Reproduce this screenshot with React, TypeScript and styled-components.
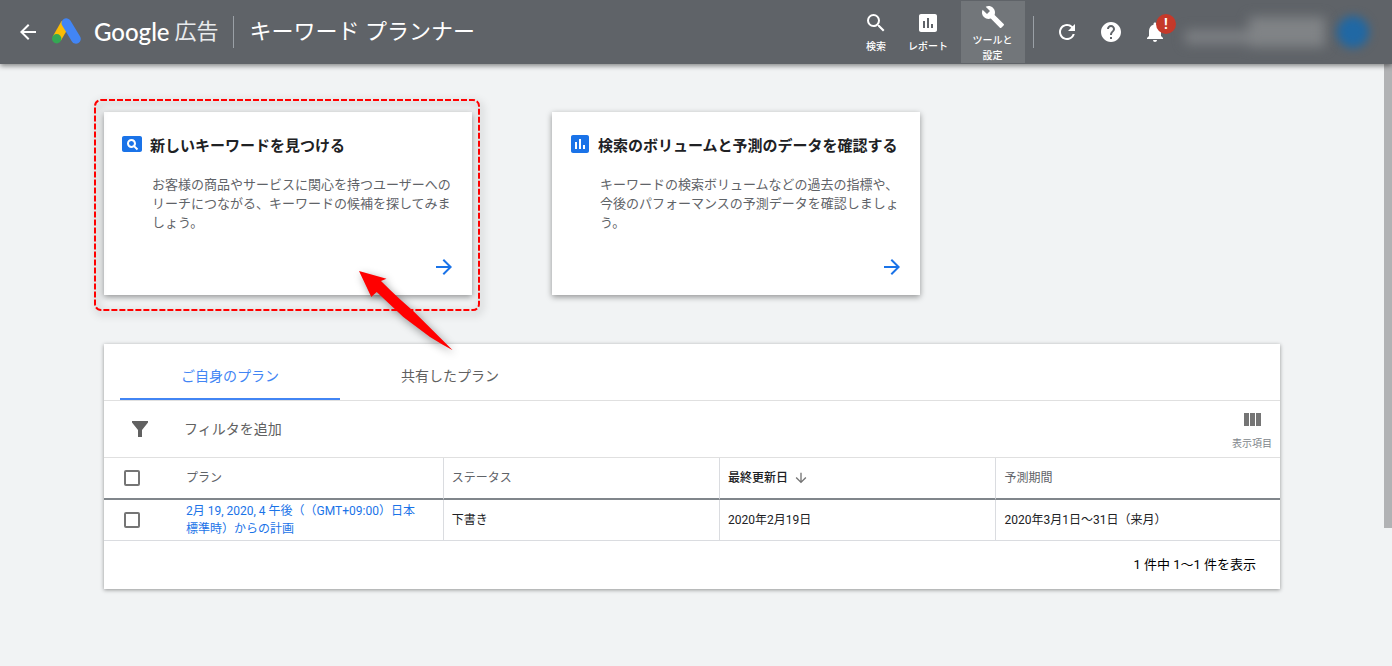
import React from 'react';
import styled, { createGlobalStyle, css } from 'styled-components';
import {
  MdArrowBack,
  MdArrowDownward,
  MdArrowForward,
  MdAssessment,
  MdBuild,
  MdHelp,
  MdNotifications,
  MdPageview,
  MdRefresh,
  MdSearch,
} from 'react-icons/md';

const GlobalStyle = createGlobalStyle`
  *, *::before, *::after { box-sizing: border-box; }
  body {
    margin: 0;
    background: #f1f3f4;
    color: #202124;
    font-family: Roboto, "Noto Sans CJK JP", sans-serif;
    font-size: 12px;
    text-spacing-trim: space-all;
  }
  button { font: inherit; color: inherit; background: none; border: 0; padding: 0; cursor: pointer; }
  a { color: inherit; text-decoration: none; }
  svg { display: block; flex: none; }
`;

const Page = styled.div`
  display: flex;
  flex-direction: column;
  min-height: 100vh;
`;

/* ---------- top bar ---------- */

const TopBar = styled.header`
  position: relative;
  z-index: 1;
  display: flex;
  align-items: center;
  height: 64px;
  padding: 0 19px 0 16px;
  background: #5f6368;
  color: #fff;
  box-shadow: 0 2px 5px rgba(0, 0, 0, 0.45);
`;

const Brand = styled.a`
  display: flex;
  align-items: center;
  margin-left: 11px;
  white-space: nowrap;
`;

const BrandName = styled.span`
  margin-left: 13px;
  font-family: Lato, sans-serif;
  font-size: 24px;
  font-weight: 500;
  line-height: 32px;
`;

const BrandProduct = styled.span`
  margin-left: 5px;
  color: #e8eaed;
  font-size: 22px;
  line-height: 32px;
`;

const Divider = styled.span<{ $before: number; $after: number }>`
  width: 1px;
  height: 32px;
  margin: 0 ${(p) => p.$after}px 0 ${(p) => p.$before}px;
  background: #9aa0a6;
`;

const PageTitle = styled.h1`
  margin: 0;
  font-size: 22px;
  font-weight: 400;
  line-height: 32px;
  white-space: nowrap;
`;

const Tools = styled.nav`
  display: flex;
  align-items: center;
  margin-left: auto;
`;

const ToolButton = styled.button<{ $active?: boolean }>`
  display: flex;
  flex-direction: column;
  align-items: center;
  justify-content: center;
  gap: 4px;
  width: 52px;
  height: 62px;
  font-size: 10px;
  font-weight: 500;
  line-height: 15px;
  ${(p) =>
    p.$active &&
    css`
      width: 64px;
      margin-left: 7px;
      padding: 4px 11px 0 10px;
      background: #72767a;
    `}
`;

const IconButton = styled.button`
  position: relative;
  display: flex;
  align-items: center;
  justify-content: center;
  width: 44px;
  height: 44px;
`;

const BackButton = styled(IconButton)`
  width: 24px;
`;

const Alert = styled.span`
  position: absolute;
  top: 4px;
  right: 1px;
  width: 20px;
  height: 20px;
  border-radius: 50%;
  background: #c5392a;
  font-size: 14px;
  font-weight: 700;
  line-height: 20px;
  text-align: center;
`;

const Account = styled.div`
  display: flex;
  align-items: center;
  margin-left: 8px;
`;

const AccountLines = styled.div`
  display: flex;
  align-items: center;
  width: 140px;
  filter: blur(6px);
`;

const AccountBlock = styled.span<{ $wide?: boolean }>`
  width: ${(p) => (p.$wide ? 76 : 64)}px;
  height: ${(p) => (p.$wide ? 30 : 14)}px;
  margin-top: ${(p) => (p.$wide ? 0 : 10)}px;
  background: ${(p) => (p.$wide ? '#808386' : '#7c7f83')};
`;

const Avatar = styled.span`
  width: 32px;
  height: 32px;
  margin: 0 4px 0 12px;
  border-radius: 50%;
  background: #2068a4;
  filter: blur(5px);
`;

/* ---------- body ---------- */

const Body = styled.div`
  display: flex;
  flex: 1;
`;

const Main = styled.main`
  display: flex;
  flex: 1;
  flex-direction: column;
  gap: 49px;
  min-width: 0;
  padding: 48px 104px;
`;

const ScrollTrack = styled.div`
  width: 8px;
`;

const ScrollThumb = styled.div`
  height: 77%;
  background: #b1b2b4;
`;

const Cards = styled.div`
  display: flex;
  gap: 80px;
`;

const CardSlot = styled.div`
  position: relative;
  flex: 0 1 368px;
`;

const Card = styled.a`
  display: flex;
  flex-direction: column;
  min-height: 183px;
  padding: 20px 16px 16px;
  background: #fff;
  box-shadow: 0 2px 6px rgba(0, 0, 0, 0.4);
`;

const CardHead = styled.div`
  display: flex;
  gap: 6px;
  color: #1a73e8;
`;

const CardTitle = styled.h2`
  margin: 0;
  color: #202124;
  font-size: 15px;
  font-weight: 700;
  line-height: 29px;
`;

const CardText = styled.p`
  margin: 14px 4px 0 32px;
  color: #5f6368;
  font-size: 13px;
  line-height: 19px;
`;

const CardGo = styled.span`
  align-self: flex-end;
  margin-top: auto;
  color: #1a73e8;
`;

const Markup = styled.svg`
  position: absolute;
  top: -16px;
  left: -14px;
  overflow: visible;
  pointer-events: none;
  filter: drop-shadow(2px 3px 4px rgba(0, 0, 0, 0.4));
`;

const Panel = styled.section`
  background: #fff;
  box-shadow: 0 1px 4px rgba(0, 0, 0, 0.4);
`;

const Tabs = styled.div`
  display: flex;
  height: 57px;
  padding: 0 16px;
  border-bottom: 1px solid #e0e0e0;
`;

const Tab = styled.button<{ $active?: boolean }>`
  width: 220px;
  height: 56px;
  padding-top: 8px;
  border-bottom: 2px solid ${(p) => (p.$active ? '#4285f4' : 'transparent')};
  color: ${(p) => (p.$active ? '#4285f4' : '#616161')};
  font-size: 14px;
`;

const FilterBar = styled.div`
  display: flex;
  align-items: center;
  height: 57px;
  padding: 0 8px 0 24px;
  border-bottom: 1px solid #e0e0e0;
  color: #616161;
`;

const AddFilter = styled.button`
  margin-left: 32px;
  font-size: 14px;
  line-height: 18px;
`;

const ColumnsButton = styled.button`
  display: flex;
  flex-direction: column;
  align-items: center;
  gap: 4px;
  margin-left: auto;
  color: #80868b;
  font-size: 10px;
  line-height: 15px;
`;

const Table = styled.table`
  width: 100%;
  border-collapse: separate;
  border-spacing: 0;
  table-layout: fixed;
`;

const Col = styled.col<{ $width?: string }>`
  width: ${(p) => p.$width || 'auto'};
`;

const HeadCell = styled.th<{ $rule?: boolean; $sorted?: boolean }>`
  height: 42px;
  padding: 0 8px;
  border-bottom: 2px solid #80868b;
  border-left: ${(p) => (p.$rule ? '1px solid #dadce0' : '0')};
  color: ${(p) => (p.$sorted ? '#202124' : '#5f6368')};
  font-weight: ${(p) => (p.$sorted ? 500 : 400)};
  line-height: 18px;
  text-align: left;
`;

const Cell = styled.td<{ $rule?: boolean }>`
  height: 41px;
  padding: 0 8px;
  border-bottom: 1px solid #dadce0;
  border-left: ${(p) => (p.$rule ? '1px solid #dadce0' : '0')};
  line-height: 18px;
`;

const SortLabel = styled.span`
  display: flex;
  align-items: center;
  gap: 5px;
  svg { color: #757575; }
`;

const Check = styled.input`
  display: block;
  width: 16px;
  height: 16px;
  margin: 0 0 0 12px;
  border: 2px solid #757575;
  border-radius: 2px;
  appearance: none;
  &:checked { background: #1a73e8; }
`;

const PlanLink = styled.a`
  display: block;
  max-width: 238px;
  color: #1a73e8;
`;

const Summary = styled.footer`
  padding: 14px 24px 14px;
  color: #000;
  font-size: 13px;
  line-height: 20px;
  text-align: right;
`;

/* ---------- drawings ---------- */

const AdsLogo = () => (
  <svg width="30" height="28" viewBox="0 0 30 28" aria-hidden="true">
    <path d="M14.5 5.400 5.700 20.700" stroke="#fbbc04" strokeWidth="9.2" />
    <path d="M15.300 5.100 25 20.900" stroke="#4285f4" strokeWidth="9.600" strokeLinecap="round" />
    <circle cx="5.700" cy="20.800" r="4.700" fill="#34a853" />
  </svg>
);

const FunnelIcon = () => (
  <svg width="24" height="24" viewBox="0 0 24 24" fill="#616161" aria-hidden="true">
    <path d="M4 4h16v1.6L14 13v7h-4v-7L4 5.6z" />
  </svg>
);

const ColumnsIcon = () => (
  <svg width="24" height="24" viewBox="0 0 24 24" fill="#757575" aria-hidden="true">
    <path d="M10 18h5V5h-5v13zm-6 0h5V5H4v13zM16 5v13h5V5h-5z" />
  </svg>
);

const Highlight = () => (
  <Markup width="392" height="260" viewBox="90 96 392 260" aria-hidden="true">
    <rect
      x="95"
      y="100"
      width="384"
      height="210"
      rx="6"
      fill="none"
      stroke="#f00"
      strokeWidth="2"
      strokeDasharray="6 2"
    />
    <path
      d="M359 271 386.500 278.700 381 281Q391 291 400 299.300L413.500 311.300 452.700 350.300Q441 344 430 337L403.300 317 376.700 292 371.300 297z"
      fill="#f00"
    />
  </Markup>
);

export default function App() {
  return (
    <Page>
      <GlobalStyle />
      <TopBar>
        <BackButton aria-label="戻る">
          <MdArrowBack size={24} />
        </BackButton>
        <Brand href="#">
          <AdsLogo />
          <BrandName>Google</BrandName>
          <BrandProduct>広告</BrandProduct>
        </Brand>
        <Divider $before={14} $after={16} />
        <PageTitle>キーワード プランナー</PageTitle>
        <Tools>
          <ToolButton>
            <MdSearch size={24} />
            検索
          </ToolButton>
          <ToolButton>
            <MdAssessment size={24} />
            レポート
          </ToolButton>
          <ToolButton $active>
            <MdBuild size={24} />
            ツールと設定
          </ToolButton>
          <Divider $before={8} $after={11} />
          <IconButton aria-label="更新">
            <MdRefresh size={24} />
          </IconButton>
          <IconButton aria-label="ヘルプ">
            <MdHelp size={24} />
          </IconButton>
          <IconButton aria-label="通知">
            <MdNotifications size={24} />
            <Alert>!</Alert>
          </IconButton>
        </Tools>
        <Account>
          <AccountLines>
            <AccountBlock />
            <AccountBlock $wide />
          </AccountLines>
          <Avatar />
        </Account>
      </TopBar>

      <Body>
        <Main>
          <Cards>
            <CardSlot>
              <Card href="#">
                <CardHead>
                  <MdPageview size={24} />
                  <CardTitle>新しいキーワードを見つける</CardTitle>
                </CardHead>
                <CardText>
                  お客様の商品やサービスに関心を持つユーザーへのリーチにつながる、キーワードの候補を探してみましょう。
                </CardText>
                <CardGo>
                  <MdArrowForward size={24} />
                </CardGo>
              </Card>
              <Highlight />
            </CardSlot>
            <CardSlot>
              <Card href="#">
                <CardHead>
                  <MdAssessment size={24} />
                  <CardTitle>検索のボリュームと予測のデータを確認する</CardTitle>
                </CardHead>
                <CardText>
                  キーワードの検索ボリュームなどの過去の指標や、今後のパフォーマンスの予測データを確認しましょう。
                </CardText>
                <CardGo>
                  <MdArrowForward size={24} />
                </CardGo>
              </Card>
            </CardSlot>
          </Cards>

          <Panel>
            <Tabs role="tablist">
              <Tab role="tab" aria-selected="true" $active>
                ご自身のプラン
              </Tab>
              <Tab role="tab" aria-selected="false">
                共有したプラン
              </Tab>
            </Tabs>
            <FilterBar>
              <FunnelIcon />
              <AddFilter>フィルタを追加</AddFilter>
              <ColumnsButton>
                <ColumnsIcon />
                表示項目
              </ColumnsButton>
            </FilterBar>
            <Table>
              <colgroup>
                <Col $width="74px" />
                <Col />
                <Col $width="23.5%" />
                <Col $width="23.5%" />
                <Col $width="24.2%" />
              </colgroup>
              <thead>
                <tr>
                  <HeadCell>
                    <Check type="checkbox" aria-label="すべて選択" />
                  </HeadCell>
                  <HeadCell>プラン</HeadCell>
                  <HeadCell $rule>ステータス</HeadCell>
                  <HeadCell $rule $sorted>
                    <SortLabel>
                      最終更新日
                      <MdArrowDownward size={16} />
                    </SortLabel>
                  </HeadCell>
                  <HeadCell $rule>予測期間</HeadCell>
                </tr>
              </thead>
              <tbody>
                <tr>
                  <Cell>
                    <Check type="checkbox" aria-label="プランを選択" />
                  </Cell>
                  <Cell>
                    <PlanLink href="#">2月 19, 2020, 4 午後（（GMT+09:00）日本標準時）からの計画</PlanLink>
                  </Cell>
                  <Cell $rule>下書き</Cell>
                  <Cell $rule>2020年2月19日</Cell>
                  <Cell $rule>2020年3月1日～31日（来月）</Cell>
                </tr>
              </tbody>
            </Table>
            <Summary>1 件中 1～1 件を表示</Summary>
          </Panel>
        </Main>
        <ScrollTrack>
          <ScrollThumb />
        </ScrollTrack>
      </Body>
    </Page>
  );
}
